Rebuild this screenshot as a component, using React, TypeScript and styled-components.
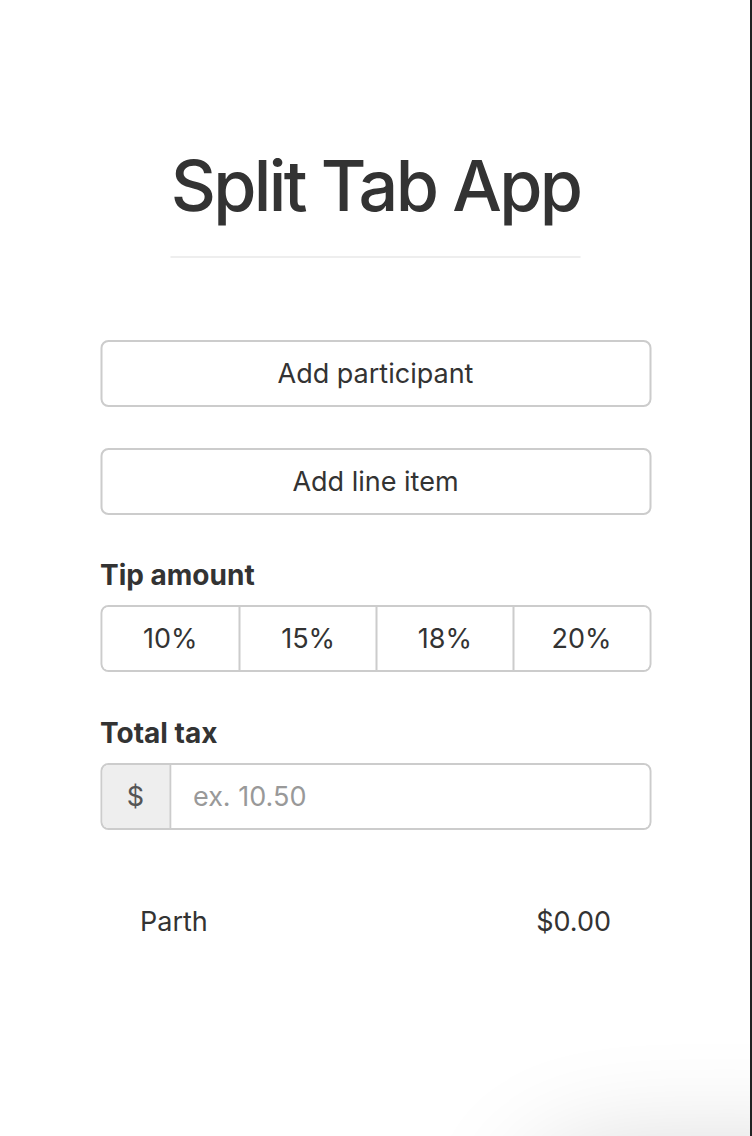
import React from "react";
import styled, { createGlobalStyle } from "styled-components";

const GlobalStyle = createGlobalStyle`
  html, body {
    margin: 0;
    padding: 0;
    background: #fff;
  }
  body {
    font-family: Inter, "Noto Sans", sans-serif;
    color: #333;
  }
`;

const Page = styled.div`
  position: relative;
  width: 752px;
  height: 1136px;
  box-sizing: border-box;
  border-right: 2px solid #222;
  overflow: hidden;
`;

const Container = styled.div`
  width: 551px;
  margin: 0 auto;
  padding-top: 146px;
  transform: translateX(0.5px);
`;

const Header = styled.header`
  display: flex;
  flex-direction: column;
  align-items: center;
`;

const Title = styled.h1`
  margin: 0;
  font-size: 70px;
  font-weight: 500;
  letter-spacing: -2.7px;
  line-height: 80px;
  color: #333;
  border-bottom: 2px solid #eee;
  padding-bottom: 30px;
`;

const Form = styled.div`
  display: flex;
  flex-direction: column;
  margin-top: 82px;
`;

const Button = styled.button`
  height: 67px;
  width: 100%;
  background: #fff;
  border: 2px solid #ccc;
  border-radius: 8px;
  font-family: inherit;
  font-size: 27px;
  color: #333;
  margin-bottom: 41px;
  cursor: pointer;
`;

const Label = styled.div<{ $top?: number }>`
  font-size: 28px;
  font-weight: 700;
  color: #333;
  line-height: 32px;
  margin-bottom: 14px;
  margin-top: ${(p) => p.$top ?? 0}px;
`;

const Group = styled.div`
  display: grid;
  grid-template-columns: repeat(4, 1fr);
  height: 67px;
  border: 2px solid #ccc;
  border-radius: 8px;
  overflow: hidden;
  box-sizing: border-box;
`;

const Segment = styled.button`
  background: #fff;
  border: none;
  border-left: 2px solid #ccc;
  font-family: inherit;
  font-size: 27px;
  color: #333;
  &:first-child {
    border-left: none;
  }
`;

const InputGroup = styled.div`
  display: flex;
  height: 67px;
  border: 2px solid #ccc;
  border-radius: 8px;
  overflow: hidden;
  box-sizing: border-box;
`;

const Addon = styled.span`
  width: 67px;
  display: flex;
  align-items: center;
  justify-content: center;
  background: #eee;
  border-right: 2px solid #ccc;
  font-size: 27px;
  color: #555;
`;

const Input = styled.input`
  flex: 1;
  border: none;
  outline: none;
  padding: 0 22px;
  font-family: inherit;
  font-size: 27px;
  color: #555;
  &::placeholder {
    color: #999;
  }
`;

const Summary = styled.div`
  display: flex;
  justify-content: space-between;
  padding: 0 40px;
  margin-top: 76px;
  font-size: 27px;
  line-height: 32px;
  color: #333;
`;

const Shade = styled.div`
  position: absolute;
  left: 540px;
  top: 1170px;
  width: 500px;
  height: 300px;
  border-radius: 60px;
  box-shadow: 0 0 120px 10px rgba(0, 0, 0, 0.2);
  pointer-events: none;
`;

export default function App() {
  return (
    <Page>
      <GlobalStyle />
      <Container>
        <Header>
          <Title>Split Tab App</Title>
        </Header>
        <Form>
          <Button>Add participant</Button>
          <Button>Add line item</Button>
          <Label $top={3}>Tip amount</Label>
          <Group>
            <Segment>10%</Segment>
            <Segment>15%</Segment>
            <Segment>18%</Segment>
            <Segment>20%</Segment>
          </Group>
          <Label $top={45}>Total tax</Label>
          <InputGroup>
            <Addon>$</Addon>
            <Input placeholder="ex. 10.50" />
          </InputGroup>
          <Summary>
            <span>Parth</span>
            <span>$0.00</span>
          </Summary>
        </Form>
      </Container>
      <Shade />
    </Page>
  );
}
